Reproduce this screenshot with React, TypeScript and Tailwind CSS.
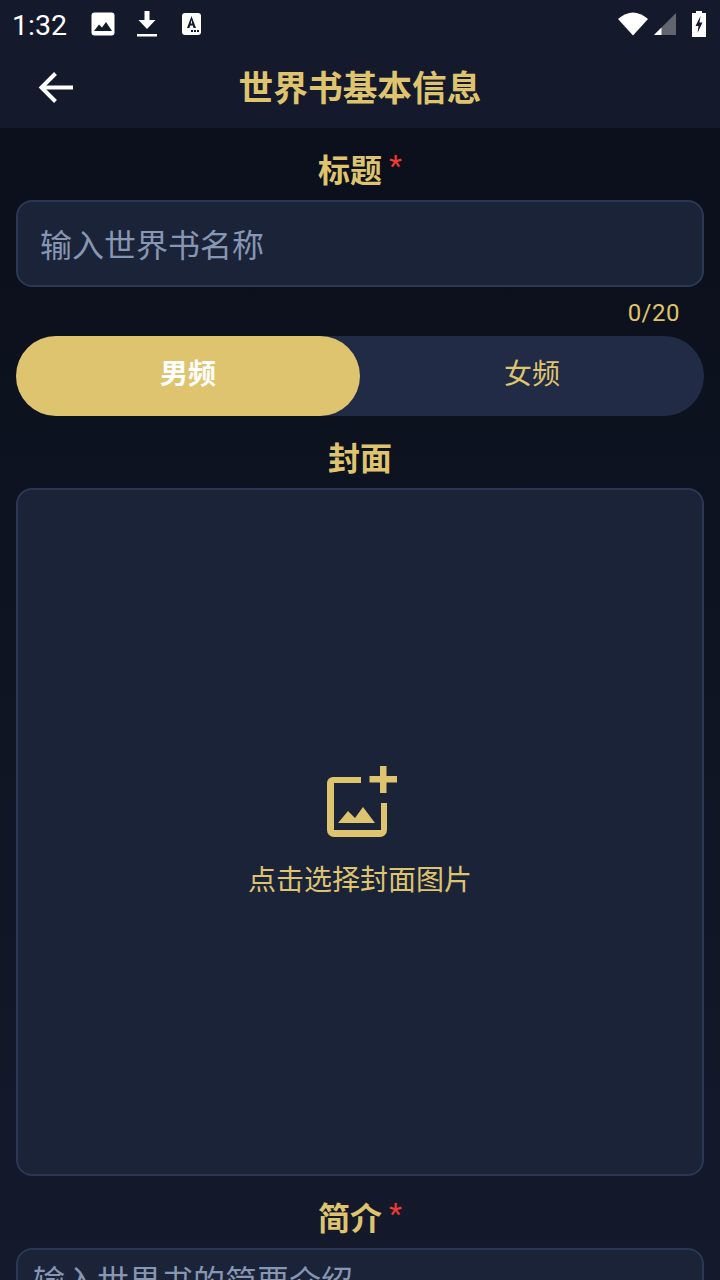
import React from "react";

const font = { fontFamily: '"Noto Sans CJK SC", Roboto, sans-serif' };

function Label({ text, required }: { text: string; required?: boolean }) {
  return (
    <div className="h-[40px] flex items-center justify-center text-[32px] leading-[36px] font-bold text-[#dfc46f]">
      <span className="-mt-[4px]">{text}</span>
      {required && (
        <span className="ml-[7px] -mt-[8px] text-[30px] leading-[36px] font-normal text-[#f23a30] [font-family:Roboto]">*</span>
      )}
    </div>
  );
}

export default function App() {
  return (
    <div
      style={font}
      className="w-[720px] h-[1280px] overflow-hidden flex flex-col bg-gradient-to-b from-[#0a0e19] to-[#141a2c]"
    >
      <header className="h-[128px] shrink-0 bg-[#141a2c] flex flex-col">
        <div className="h-[48px] flex items-center text-white relative">
          <span className="ml-[12px] w-[62px] pt-[3px] text-[28.5px] leading-[48px] [font-family:Roboto]">1:32</span>
          <svg className="ml-[16px]" width="26" height="26" viewBox="0 0 26 26">
            <rect x="1.500" y="1.500" width="23" height="23" rx="3" fill="#fff" />
            <path d="M4 20 L9 13.500 L12 16.500 L16 11 L22 20 Z" fill="#141a2c" />
          </svg>
          <svg className="ml-[19px]" width="24" height="28" viewBox="0 0 24 28">
            <path d="M9 1 H14 V10 H20 L11.500 19 L3 10 H9 Z" fill="#fff" transform="translate(0.5 0)" />
            <rect x="2" y="24" width="20" height="2.500" fill="#fff" />
          </svg>
          <svg className="ml-[22px]" width="22" height="24" viewBox="0 0 22 24">
            <rect x="1" y="1" width="19" height="22" rx="3" fill="#fff" />
            <path d="M10.500 4 L6 16 H8.400 L9.200 13.500 H11.800 L12.600 16 H15 Z M10.500 7.800 L11.200 11.400 H9.800 Z" fill="#141a2c" fillRule="evenodd" />
            <rect x="10" y="18" width="2" height="2" fill="#141a2c" />
            <rect x="13" y="18" width="2" height="2" fill="#141a2c" />
            <rect x="16" y="18" width="2" height="2" fill="#141a2c" />
          </svg>
          <div className="ml-auto flex items-center">
            <svg width="32" height="26" viewBox="0 0 32 26">
              <path d="M1 8 Q16 -5 31 8 L16 24.500 Z" fill="#fff" />
            </svg>
            <svg className="ml-[5px]" width="22" height="22" viewBox="0 0 22 22">
              <path d="M22 0 V22 H0 Z" fill="#62656f" />
              <path d="M7.500 14.500 V22 H0 Z" fill="#fff" />
            </svg>
            <svg className="ml-[16px] mr-[14px]" width="14" height="26" viewBox="0 0 14 26">
              <path d="M4 0 H10 V2 H14 V26 H0 V2 H4 Z" fill="#fff" />
              <path d="M8.500 5 L3.500 15 H6.500 L5.500 22 L10.500 11.500 H7.500 Z" fill="#141a2c" />
            </svg>
          </div>
        </div>
        <div className="h-[80px] flex items-center justify-center relative">
          <svg className="absolute left-[38px] top-[22px]" width="36" height="36" viewBox="0 0 36 36" fill="none" stroke="#fff" strokeWidth="4">
            <path d="M35 17.500 H5" />
            <path d="M17.500 3.500 L3.500 17.500 L17.500 31.500" />
          </svg>
          <span className="-mt-[5px] text-[34.700px] leading-[48px] font-bold text-[#dfc46f]">世界书基本信息</span>
        </div>
      </header>

      <main className="flex-1 px-[16px] pt-[22px] flex flex-col">
        <Label text="标题" required />
        <div className="mt-[10px] h-[87px] shrink-0 rounded-[16px] border-2 border-[#2b3853] bg-[#1b2338] flex items-center pl-[22px] pb-[2px] text-[32px] text-[#8796b3]">
          输入世界书名称
        </div>
        <div className="h-[49px] shrink-0 pr-[24px] flex items-center justify-end text-[24px] tracking-[0.5px] text-[#dfc46f] [font-family:Roboto] pt-[3px]">
          0/20
        </div>
        <div className="h-[80px] shrink-0 rounded-full bg-[#212b45] flex text-[28px] leading-[40px]">
          <div className="w-1/2 rounded-full bg-[#dfc46f] flex items-center justify-center font-bold text-white pb-[8px]">男频</div>
          <div className="w-1/2 flex items-center justify-center text-[#dfc46f] pb-[8px]">女频</div>
        </div>
        <div className="mt-[22px]">
          <Label text="封面" />
        </div>
        <div className="mt-[10px] h-[688px] shrink-0 rounded-[16px] border-2 border-[#2b3853] bg-[#1b2338] flex flex-col items-center justify-center">
          <svg className="mt-[1px] ml-[3px]" width="72" height="72" viewBox="0 0 72 72" fill="#dfc46f">
            <path d="M3 17 a6 6 0 0 1 6 -6 H37 V17 H10 V64 H57 V37 H63 V64 a7 7 0 0 1 -7 7 H10 a7 7 0 0 1 -7 -7 Z" transform="translate(-2 0)" />
            <path d="M49 0 H55.500 V10 H66 V16.500 H55.500 V27 H49 V16.500 H38.500 V10 H49 Z" transform="translate(5 0)" />
            <path d="M12 57 L22 45 L29 52 L37 41 L49 57 Z" />
          </svg>
          <span className="mt-[20px] mb-[2px] text-[28px] leading-[40px] text-[#dfc46f]">点击选择封面图片</span>
        </div>
        <div className="mt-[22px]">
          <Label text="简介" required />
        </div>
        <div className="mt-[10px] h-[120px] shrink-0 rounded-[16px] border-2 border-[#2b3853] bg-[#1b2338] px-[15px] pt-[5px] text-[32px] leading-[48px] text-[#8796b3]">
          输入世界书的简要介绍
        </div>
      </main>
    </div>
  );
}
